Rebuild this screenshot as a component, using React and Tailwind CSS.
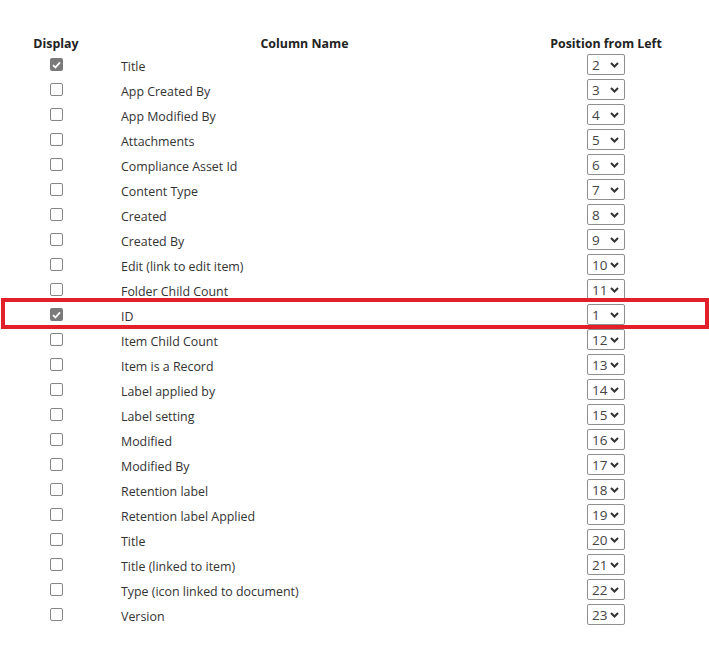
import React from "react";

const rows = [
  { name: "Title", pos: 2, checked: true },
  { name: "App Created By", pos: 3 },
  { name: "App Modified By", pos: 4 },
  { name: "Attachments", pos: 5 },
  { name: "Compliance Asset Id", pos: 6 },
  { name: "Content Type", pos: 7 },
  { name: "Created", pos: 8 },
  { name: "Created By", pos: 9 },
  { name: "Edit (link to edit item)", pos: 10 },
  { name: "Folder Child Count", pos: 11 },
  { name: "ID", pos: 1, checked: true, highlight: true },
  { name: "Item Child Count", pos: 12 },
  { name: "Item is a Record", pos: 13 },
  { name: "Label applied by", pos: 14 },
  { name: "Label setting", pos: 15 },
  { name: "Modified", pos: 16 },
  { name: "Modified By", pos: 17 },
  { name: "Retention label", pos: 18 },
  { name: "Retention label Applied", pos: 19 },
  { name: "Title", pos: 20 },
  { name: "Title (linked to item)", pos: 21 },
  { name: "Type (icon linked to document)", pos: 22 },
  { name: "Version", pos: 23 },
];

const Checkbox = ({ checked }) =>
  checked ? (
    <div className="w-[13px] h-[13px] rounded-[2px] bg-[#7a7a7a] flex items-center justify-center">
      <svg width="9" height="8" viewBox="0 0 9 8">
        <path d="M1 4.2 L3.4 6.5 L8 1.3" fill="none" stroke="#fff" strokeWidth="1.8" />
      </svg>
    </div>
  ) : (
    <div className="w-[13px] h-[13px] rounded-[2px] border border-[#858585] bg-white"></div>
  );

const PosSelect = ({ value }) => (
  <div className="w-[38px] h-[21px] border border-[#8f8f8f] rounded-[2px] bg-white flex items-center justify-between pl-[4px] pr-[5px] text-[13.5px] text-[#444]">
    <span className="pt-[1px]">{value}</span>
    <svg width="9" height="6" viewBox="0 0 9 6">
      <path d="M1 1 L4.5 4.5 L8 1" fill="none" stroke="#333" strokeWidth="2" />
    </svg>
  </div>
);

const App = () => {
  return (
    <div
      className="w-[709px] h-[667px] bg-white pt-[34px] text-[12.4px] text-[#333]"
      style={{ fontFamily: '"Open Sans", "Noto Sans", sans-serif' }}
    >
      <div className="flex h-[18px] items-center font-bold text-[#222] pt-[2px]">
        <div className="ml-[20px] w-[72px] text-center">Display</div>
        <div className="ml-[29px] w-[367px] text-center">Column Name</div>
        <div className="ml-[15px] w-[206px] text-center">Position from Left</div>
      </div>

      {rows.map((row, i) => (
        <div key={i} className="relative flex h-[25px] items-center">
          <div className="ml-[20px] w-[72px] flex justify-center">
            <Checkbox checked={row.checked} />
          </div>
          <div className="ml-[29px] w-[367px] pt-[6px]">{row.name}</div>
          <div className="ml-[15px] w-[206px] flex justify-center">
            <PosSelect value={row.pos} />
          </div>
          {row.highlight && (
            <div className="absolute left-[1px] right-0 -top-[4px] -bottom-[2px] border-4 border-[#e2202a]"></div>
          )}
        </div>
      ))}
    </div>
  );
};

export default App;
